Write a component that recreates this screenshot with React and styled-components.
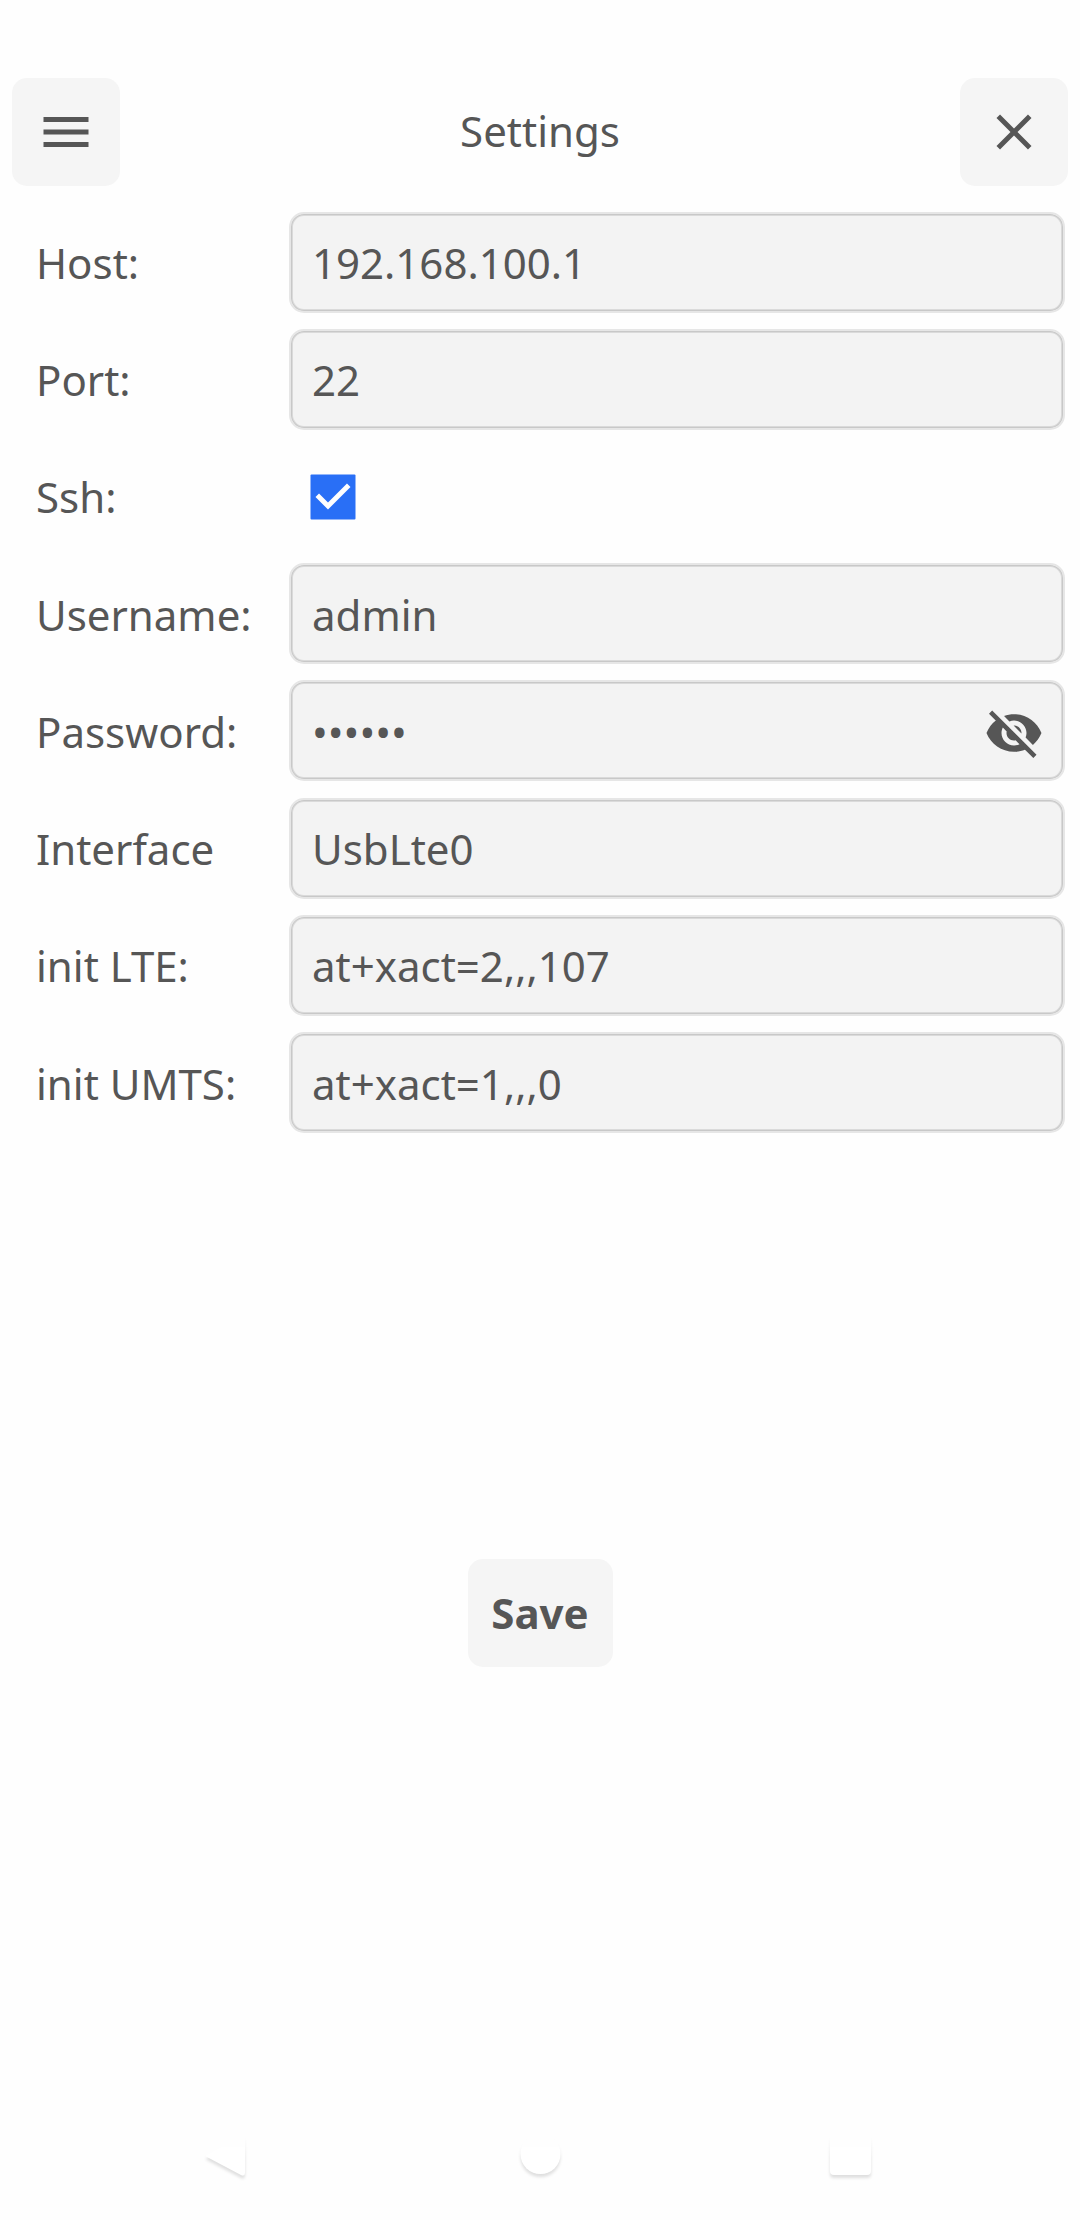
import React from "react";
import styled, { createGlobalStyle } from "styled-components";

const GlobalStyle = createGlobalStyle`
  * { box-sizing: border-box; }
  body {
    margin: 0;
    background: #fefefe;
    color: #565656;
    font: 42px/57px "Noto Sans", "Open Sans", sans-serif;
  }
`;

const Screen = styled.main`
  display: flex;
  flex-direction: column;
  width: 1080px;
  height: 2220px;
  padding-top: 78px;
  overflow: hidden;
`;

const Header = styled.header`
  display: flex;
  align-items: center;
  justify-content: space-between;
  height: 108px;
  padding: 0 12px;
`;

const Title = styled.h1`
  margin: 0;
  padding-bottom: 3px;
  font-size: 42px;
  font-weight: 400;
`;

const Button = styled.button`
  display: flex;
  align-items: center;
  justify-content: center;
  width: ${(p) => p.$width || 108}px;
  height: 108px;
  padding: 0;
  border: 0;
  border-radius: 15px;
  background: #f5f5f5;
  color: inherit;
  font: inherit;
  font-weight: 700;
  line-height: 56px;
`;

const Icon = styled.svg`
  display: block;
  flex: none;
  width: 60px;
  height: 60px;
  fill: currentColor;
`;

const Form = styled.form`
  display: flex;
  flex-direction: column;
  gap: 16.22px;
  margin-top: 25.55px;
  padding: 0 15px 0 36px;
`;

const Row = styled.div`
  display: grid;
  grid-template-columns: 253px 1fr;
  align-items: center;
  height: 101px;
`;

const Label = styled.label`
  padding-top: 0.9px;
  white-space: nowrap;
`;

const Field = styled.div`
  display: flex;
  align-items: center;
  justify-content: space-between;
  height: 101px;
  padding: 0 19px 0 21px;
  border: 2px solid #e6e6e6;
  border-radius: 15px;
  background: #f3f3f3;
  box-shadow: inset 0 0 0 1px #c8c8c8, inset 0 0 0 2px #dadada;
`;

const Value = styled.span`
  padding-top: 0.9px;
`;

const RevealIcon = styled(Icon)`
  margin-top: 5px;
`;

const CheckCell = styled.div`
  padding: 1px 0 0 14px;
`;

const Actions = styled.div`
  display: flex;
  justify-content: center;
  margin-top: 425.9px;
`;

const SystemNav = styled.nav`
  display: flex;
  justify-content: space-between;
  margin-top: 463px;
  padding: 0 200px 0 195px;
`;

const NavGlyph = styled.svg`
  width: 60px;
  height: 60px;
  fill: #fff;
  filter: drop-shadow(0 3px 1.5px rgba(0, 0, 0, 0.12));
  mask-image: linear-gradient(transparent 6px, #000 28px);
`;

const paths = {
  menu: "M3 18h18v-2H3v2zm0-5h18v-2H3v2zm0-7v2h18V6H3z",
  close:
    "M19 6.41L17.59 5 12 10.59 6.41 5 5 6.41 10.59 12 5 17.59 6.41 19 12 13.41 17.59 19 19 17.59 13.41 12z",
  hidden:
    "M12 7c2.76 0 5 2.24 5 5 0 .65-.13 1.26-.36 1.83l2.92 2.92c1.51-1.26 2.7-2.89 3.43-4.75-1.73-4.39-6-7.5-11-7.5-1.4 0-2.74.25-3.98.7l2.16 2.16C10.74 7.13 11.35 7 12 7zM2 4.27l2.28 2.28.46.46C3.08 8.3 1.78 10.02 1 12c1.73 4.39 6 7.5 11 7.5 1.55 0 3.03-.3 4.38-.84l.42.42L19.73 22 21 20.73 3.27 3 2 4.27zM7.53 9.8l1.55 1.55c-.05.21-.08.43-.08.65 0 1.66 1.34 3 3 3 .22 0 .44-.03.65-.08l1.55 1.55c-.67.33-1.41.53-2.2.53-2.76 0-5-2.24-5-5 0-.79.2-1.53.53-2.2zm4.31-.78l3.15 3.15.02-.16c0-1.66-1.34-3-3-3l-.17.01z",
};

const fields = [
  { label: "Host:", value: "192.168.100.1" },
  { label: "Port:", value: "22" },
  { label: "Ssh:", checkbox: true },
  { label: "Username:", value: "admin" },
  { label: "Password:", value: "••••••", secret: true },
  { label: "Interface", value: "UsbLte0" },
  { label: "init LTE:", value: "at+xact=2,,,107" },
  { label: "init UMTS:", value: "at+xact=1,,,0" },
];

function Checkbox() {
  return (
    <CheckCell>
      <Icon viewBox="0 0 24 24" role="checkbox" aria-checked="true">
        <rect x="3" y="3" width="18" height="18" rx="0.4" fill="#296ff6" />
        <path d="M10 17l-5-5 1.41-1.41L10 14.17l7.59-7.59L19 8z" fill="#fefefe" />
      </Icon>
    </CheckCell>
  );
}

export default function App() {
  return (
    <>
      <GlobalStyle />
      <Screen>
        <Header>
          <Button aria-label="Menu">
            <Icon viewBox="0 0 24 24"><path d={paths.menu} /></Icon>
          </Button>
          <Title>Settings</Title>
          <Button aria-label="Close">
            <Icon viewBox="0 0 24 24"><path d={paths.close} /></Icon>
          </Button>
        </Header>
        <Form>
          {fields.map((f) => (
            <Row key={f.label}>
              <Label>{f.label}</Label>
              {f.checkbox ? (
                <Checkbox />
              ) : (
                <Field>
                  <Value>{f.value}</Value>
                  {f.secret && (
                    <RevealIcon viewBox="0 0 24 24"><path d={paths.hidden} /></RevealIcon>
                  )}
                </Field>
              )}
            </Row>
          ))}
        </Form>
        <Actions>
          <Button $width={145}>Save</Button>
        </Actions>
        <SystemNav>
          <NavGlyph viewBox="0 0 60 60">
            <path d="M12 25L47 5Q50 4 50 8V42Q50 47 46 45L12 27Q10 26 12 25Z" />
          </NavGlyph>
          <NavGlyph viewBox="0 0 60 60">
            <circle cx="32.5" cy="24" r="20" />
          </NavGlyph>
          <NavGlyph viewBox="0 0 60 60">
            <rect x="10" y="4" width="41" height="41" rx="4" />
          </NavGlyph>
        </SystemNav>
      </Screen>
    </>
  );
}
